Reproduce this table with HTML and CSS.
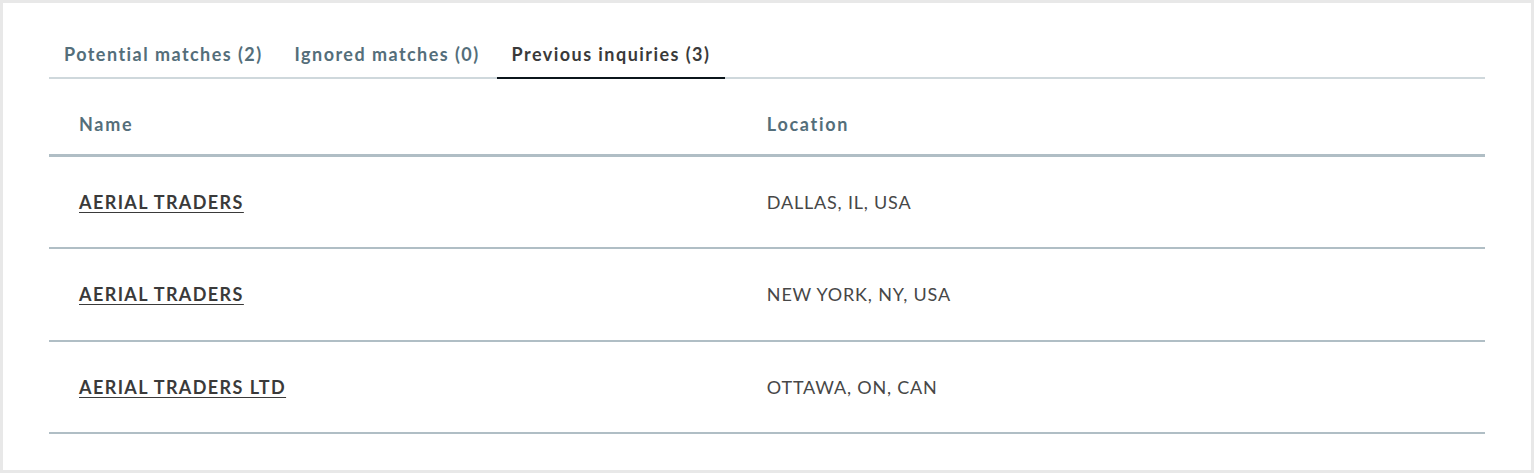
FILE: index.html
```html
<!DOCTYPE html>
<html>
<head>
<meta charset="utf-8">
<link rel="stylesheet" href="styles.css">
</head>
<body>
<div class="frame">
  <div class="panel">
    <div class="tabs">
      <div class="tab">Potential matches (2)</div>
      <div class="tab">Ignored matches (0)</div>
      <div class="tab active">Previous inquiries (3)</div>
    </div>
    <table class="results">
      <colgroup>
        <col class="col-name">
        <col class="col-loc">
      </colgroup>
      <thead>
        <tr><th>Name</th><th>Location</th></tr>
      </thead>
      <tbody>
        <tr><td><a class="name" href="#">AERIAL TRADERS</a></td><td>DALLAS, IL, USA</td></tr>
        <tr><td><a class="name" href="#">AERIAL TRADERS</a></td><td>NEW YORK, NY, USA</td></tr>
        <tr><td><a class="name" href="#">AERIAL TRADERS LTD</a></td><td>OTTAWA, ON, CAN</td></tr>
      </tbody>
    </table>
  </div>
</div>
</body>
</html>
```

FILE: styles.css
```css
html, body {
  margin: 0;
  padding: 0;
  background: #e8e8e8;
}
body {
  font-family: Lato, "Liberation Sans", sans-serif;
}
.frame {
  padding: 3px;
  height: 473px;
  box-sizing: border-box;
}
.panel {
  background: #fff;
  height: 100%;
  box-sizing: border-box;
  padding: 31px 46px 0;
}
.tabs {
  display: flex;
  border-bottom: 2px solid #cfd8dc;
}
.tab {
  padding: 9px 15px 12px;
  font-size: 18px;
  line-height: 22px;
  font-weight: 700;
  letter-spacing: 1.45px;
  color: #546e7a;
  margin-bottom: -2px;
  border-bottom: 2px solid transparent;
}
.tab + .tab {
  margin-left: 2px;
}
.tab.active {
  color: #3a3a3a;
  border-bottom-color: #0b151b;
}
.results {
  width: 100%;
  border-collapse: collapse;
  table-layout: fixed;
  margin-top: 16px;
}
.col-name {
  width: 47.9%;
}
.results th {
  text-align: left;
  font-size: 18px;
  font-weight: 700;
  letter-spacing: 1.7px;
  color: #546e7a;
  padding: 18px 30px 19px;
  line-height: 22px;
  border-bottom: 3px solid #b0bec5;
}
.results td {
  height: 92.5px;
  padding: 0 30px;
  font-size: 18px;
  letter-spacing: 0.8px;
  color: #474747;
  border-bottom: 2px solid #b0bec5;
  box-sizing: border-box;
}
.name {
  color: #3a3a3a;
  font-weight: 700;
  letter-spacing: 1.4px;
  text-decoration: underline;
  text-underline-offset: 3px;
}
```
